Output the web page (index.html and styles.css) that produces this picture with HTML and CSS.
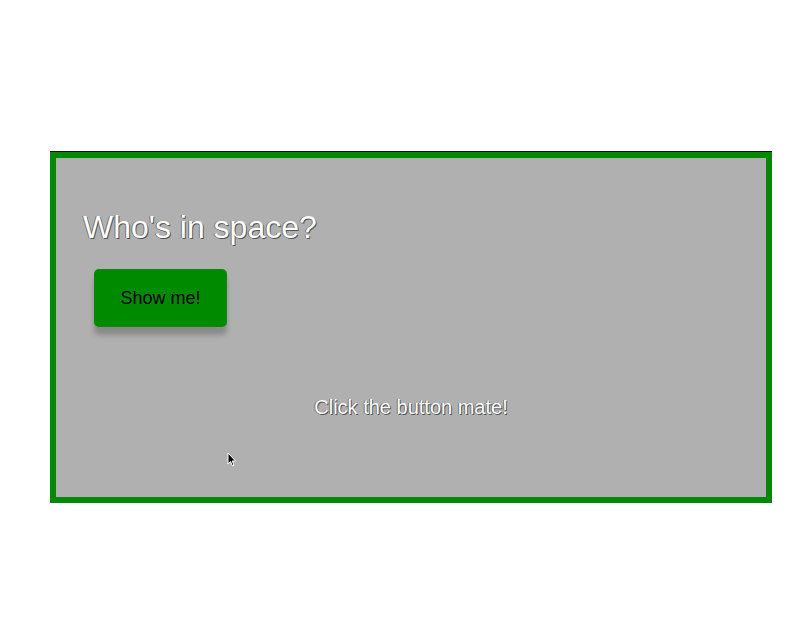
FILE: index.html
```html
<!DOCTYPE html>
<html>
<head>
<meta charset="utf-8">
<link rel="stylesheet" href="styles.css">
</head>
<body>
<div class="page">
  <div class="panel">
    <h1 class="title">Who's in space?</h1>
    <button class="btn">Show me!</button>
    <p class="message">Click the button mate!</p>
  </div>
</div>
<svg class="cursor" width="12" height="16" viewBox="0 0 12 16"><path d="M1 1 L1 12 L3.5 9.5 L5.5 14 L7 13.3 L5.2 9 L8.5 9 Z" fill="#000" stroke="#fff" stroke-width="1"/></svg>
</body>
</html>
```
FILE: styles.css
```css
html, body {
  margin: 0;
  background: #ffffff;
  font-family: "Liberation Sans", Arial, sans-serif;
}
.page {
  padding: 152px 0 0 50px;
}
.panel {
  box-sizing: border-box;
  width: 722px;
  height: 351px;
  border: 6px solid #058805;
  background: #b0b0b0;
  padding: 0 27px;
  display: flex;
  flex-direction: column;
  align-items: flex-start;
  box-shadow: 0 -1px 0 #111, 0 1px 0 #111;
}
.title {
  margin: 51px 0 0 0;
  font-size: 32px;
  font-weight: normal;
  color: #ffffff;
  text-shadow: 1px 1px 0 rgba(0,0,0,0.55), -1px 0 0 rgba(0,0,0,0.4);
}
.btn {
  margin: 23px 0 0 11px;
  width: 133px;
  height: 58px;
  border: none;
  border-radius: 5px;
  background: #008a00;
  color: #000;
  font-family: "Liberation Sans", Arial, sans-serif;
  font-size: 18px;
  box-shadow: 0 8px 5px rgba(0,0,0,0.22);
  padding: 0;
}
.message {
  align-self: stretch;
  margin: 69px 0 0 0;
  text-align: center;
  font-size: 20px;
  color: #ffffff;
  text-shadow: 1px 1px 0 rgba(0,0,0,0.55), -1px 0 0 rgba(0,0,0,0.4);
}
.cursor {
  position: absolute;
  left: 227px;
  top: 452px;
}
```
